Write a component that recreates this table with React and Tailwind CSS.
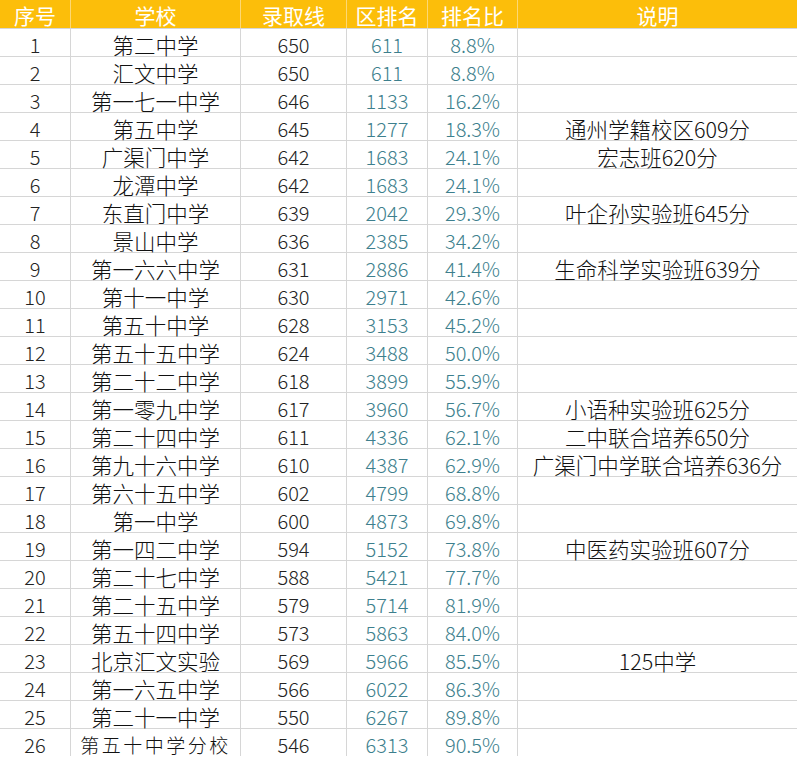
const rows = [
  [1, '第二中学', 650, 611, '8.8%', ''],
  [2, '汇文中学', 650, 611, '8.8%', ''],
  [3, '第一七一中学', 646, 1133, '16.2%', ''],
  [4, '第五中学', 645, 1277, '18.3%', '通州学籍校区609分'],
  [5, '广渠门中学', 642, 1683, '24.1%', '宏志班620分'],
  [6, '龙潭中学', 642, 1683, '24.1%', ''],
  [7, '东直门中学', 639, 2042, '29.3%', '叶企孙实验班645分'],
  [8, '景山中学', 636, 2385, '34.2%', ''],
  [9, '第一六六中学', 631, 2886, '41.4%', '生命科学实验班639分'],
  [10, '第十一中学', 630, 2971, '42.6%', ''],
  [11, '第五十中学', 628, 3153, '45.2%', ''],
  [12, '第五十五中学', 624, 3488, '50.0%', ''],
  [13, '第二十二中学', 618, 3899, '55.9%', ''],
  [14, '第一零九中学', 617, 3960, '56.7%', '小语种实验班625分'],
  [15, '第二十四中学', 611, 4336, '62.1%', '二中联合培养650分'],
  [16, '第九十六中学', 610, 4387, '62.9%', '广渠门中学联合培养636分'],
  [17, '第六十五中学', 602, 4799, '68.8%', ''],
  [18, '第一中学', 600, 4873, '69.8%', ''],
  [19, '第一四二中学', 594, 5152, '73.8%', '中医药实验班607分'],
  [20, '第二十七中学', 588, 5421, '77.7%', ''],
  [21, '第二十五中学', 579, 5714, '81.9%', ''],
  [22, '第五十四中学', 573, 5863, '84.0%', ''],
  [23, '北京汇文实验', 569, 5966, '85.5%', '125中学'],
  [24, '第一六五中学', 566, 6022, '86.3%', ''],
  [25, '第二十一中学', 550, 6267, '89.8%', ''],
  [26, '第五十中学分校', 546, 6313, '90.5%', ''],
];

const headers = ['序号', '学校', '录取线', '区排名', '排名比', '说明'];

const cols = 'grid grid-cols-[71px_170px_106px_81px_90px_1fr]';
const cell = 'flex items-center justify-center';

export default function App() {
  return (
    <div
      className="w-[797px] h-[758px] bg-white overflow-hidden leading-none font-light"
      style={{ fontFamily: '"Noto Sans CJK SC", "Noto Sans", sans-serif' }}
    >
      <div className={cols + ' h-[28px] bg-[#fcbe0a] text-white text-[21px] font-normal'}>
        {headers.map((h) => (
          <div key={h} className="flex items-center justify-center pt-[3px] border-r border-[#fdd874] last:border-r-0">
            {h}
          </div>
        ))}
      </div>
      {rows.map((r, i) => {
        const last = i === rows.length - 1;
        return (
          <div key={r[0]} className={cols + ' h-[28px] border-t border-[#d6d6d6] text-[20px]'}>
            <div className={cell + ' pt-[5px] border-r border-[#d6d6d6] text-[#222]'}>{r[0]}</div>
            <div
              className={
                cell +
                (last ? ' pt-[3px] text-[19px] tracking-[2.5px]' : ' pt-[4px] text-[21.5px]') +
                ' border-r border-[#d6d6d6] text-[#111]'
              }
            >
              {r[1]}
            </div>
            <div className={cell + ' pt-[5px] border-r border-[#d6d6d6] text-[#222]'}>{r[2]}</div>
            <div className={cell + ' pt-[5px] border-r border-[#d6d6d6] text-[#3d7f8d]'}>{r[3]}</div>
            <div className={cell + ' pt-[5px] border-r border-[#d6d6d6] text-[#3d7f8d]'}>{r[4]}</div>
            <div className={cell + ' pt-[4px] text-[#111] text-[21.5px] whitespace-nowrap'}>{r[5]}</div>
          </div>
        );
      })}
    </div>
  );
}
